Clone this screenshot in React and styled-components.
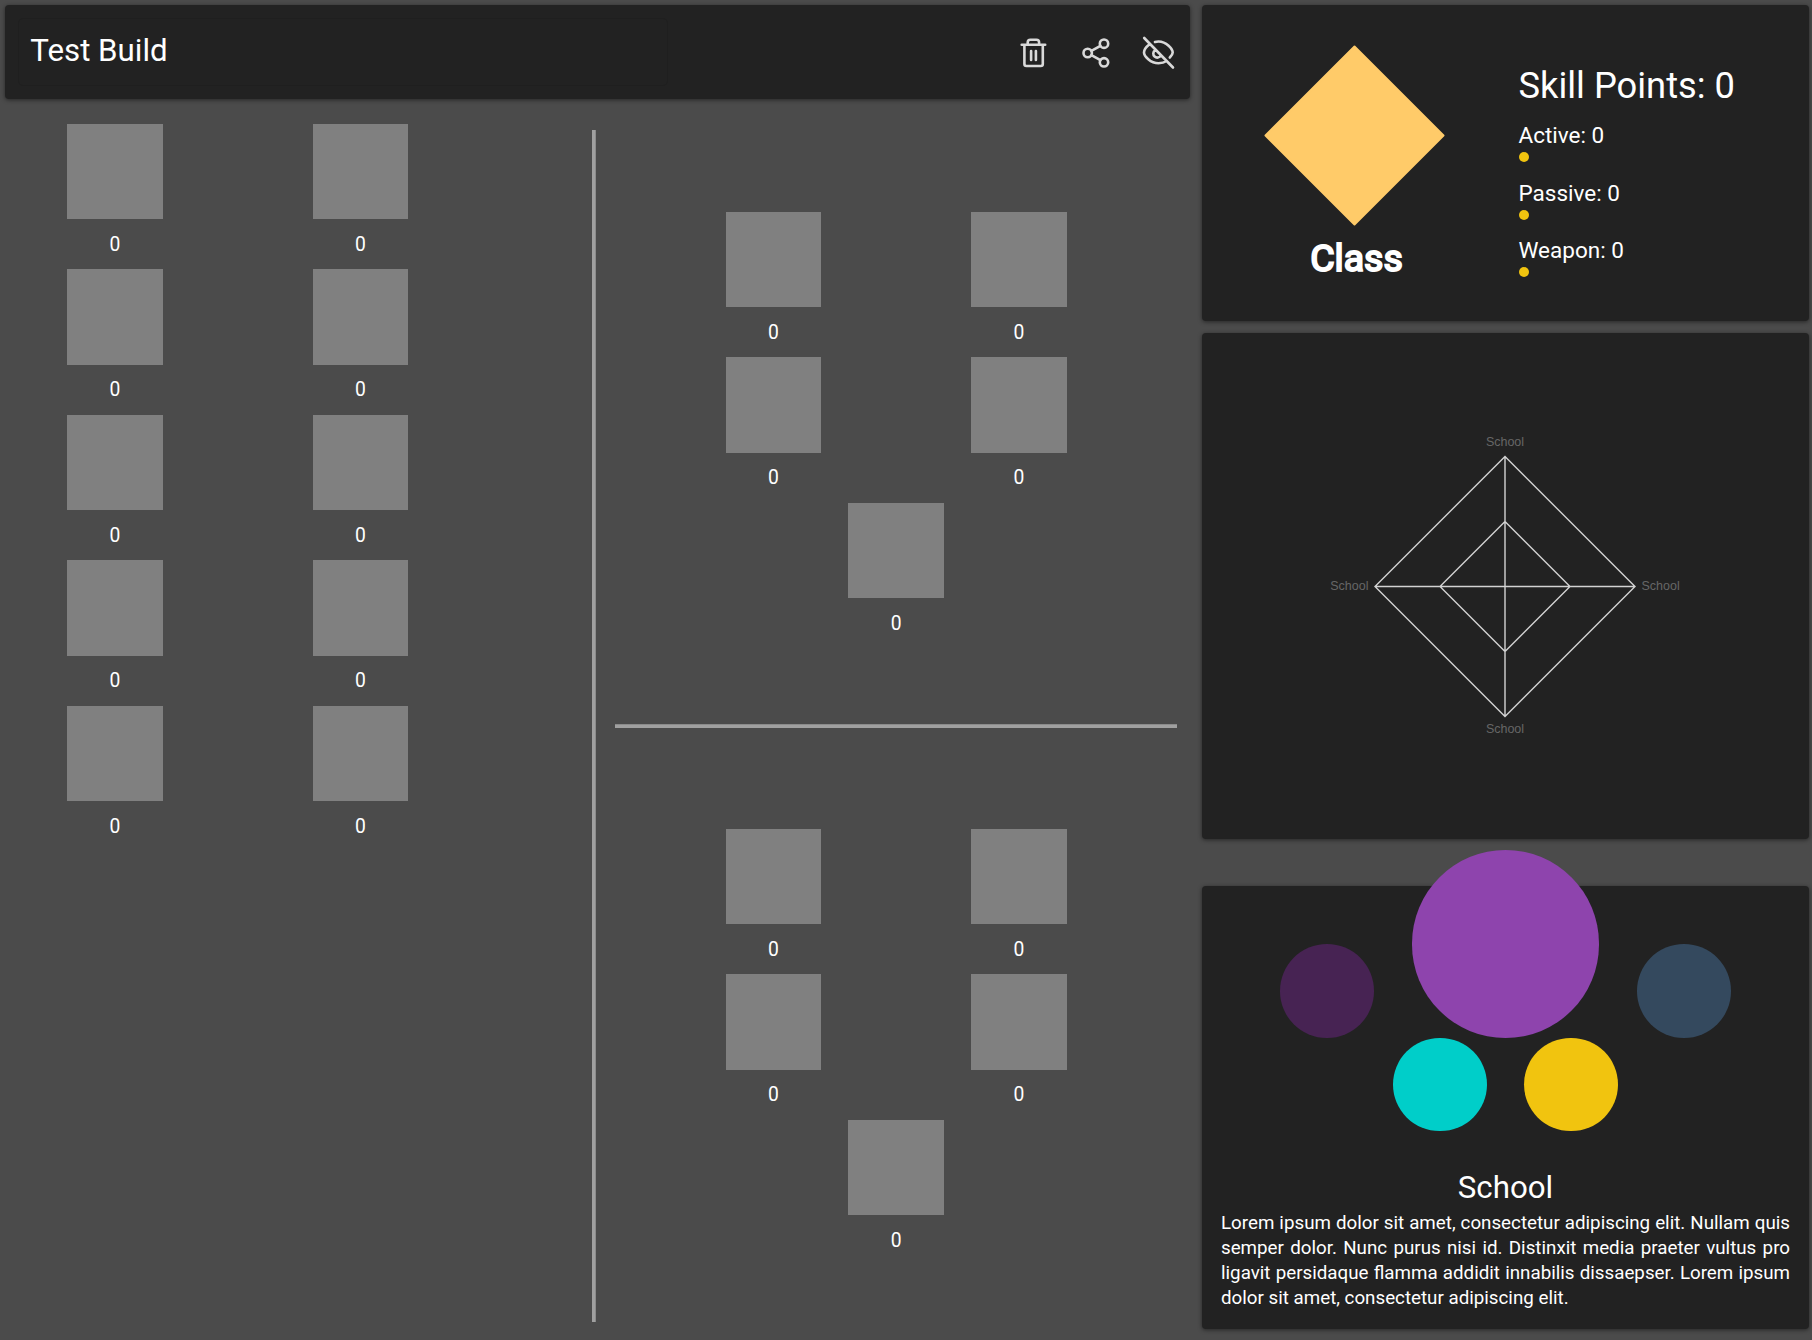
import React from "react";
import styled, { createGlobalStyle } from "styled-components";

const GlobalStyle = createGlobalStyle`
  * { box-sizing: border-box; }
  body { margin: 0; background: #4b4b4b; color: #fff; font-family: Roboto, sans-serif; font-size: 18.75px; }
  h1, h2, h3, p { margin: 0; font-weight: 400; }
`;

const Page = styled.div`
  display: grid;
  grid-template-columns: 1185px 607px;
  column-gap: 12px;
  height: 1340px;
  padding: 5px;
`;

const Panel = styled.section`
  background: #222;
  border-radius: 4px;
  box-shadow: 0 1px 4px rgba(0, 0, 0, 0.5);
`;

const Header = styled(Panel)`
  display: flex;
  align-items: center;
  height: 94px;
  padding: 0 13px;
`;

const NameField = styled.h1`
  width: 650px;
  height: 68px;
  padding: 9px 11.3px;
  border: 1px solid #1f1f1f;
  border-radius: 5px;
  font-size: 31.25px;
  line-height: 46px;
`;

const Actions = styled.nav`
  display: flex;
  gap: 22px;
  margin-left: auto;
  margin-right: -1px;
`;

const IconButton = styled.button`
  display: flex;
  padding: 0;
  border: 0;
  background: none;
  color: #d9d9d9;
`;

const Board = styled.main`
  display: grid;
  grid-template-columns: 587px 4px 1fr;
  height: 1223px;
`;

const ActiveGrid = styled.div`
  display: grid;
  grid-template-columns: 95.6px 95.6px;
  column-gap: 150px;
  align-content: start;
  padding: 25px 0 0 62px;
`;

const Slot = styled.div`
  display: flex;
  flex-direction: column;
  align-items: center;
  height: 145.48px;
`;

const SlotBox = styled.div`
  width: 95.6px;
  height: 95.3px;
  background: #808080;
`;

const SlotCount = styled.span`
  margin-top: 11.7px;
  font-size: 19.3px;
  line-height: 28px;
`;

const VerticalRule = styled.div`
  margin-top: 31px;
  background: #a0a0a0;
  border-right: 1px solid #8b8b8b;
`;

const SideGroups = styled.div`
  display: flex;
  flex-direction: column;
  padding: 113px 13px 0 19px;
`;

const Group = styled.div`
  display: grid;
  grid-template-columns: 95.6px 95.6px;
  column-gap: 149.8px;
  align-content: start;
  padding-left: 110.7px;
  ${Slot}:last-child {
    grid-column: 1 / -1;
  }
`;

const HorizontalRule = styled.div`
  height: 4px;
  margin: 75.8px 0 100.8px;
  background: #a0a0a0;
  border-top: 1px solid #8b8b8b;
`;

const Sidebar = styled.aside`
  display: flex;
  flex-direction: column;
`;

const ClassPanel = styled(Panel)`
  display: flex;
  height: 316px;
`;

const ClassInfo = styled.div`
  display: flex;
  flex-direction: column;
  align-items: center;
  width: 305px;
  padding-top: 40px;
`;

const ClassName = styled.h2`
  margin-top: 7px;
  padding-left: 4px;
  font-size: 37.5px;
  line-height: 48px;
  -webkit-text-stroke: 2px #fff;
`;

const Points = styled.div`
  padding: 58px 0 0 11.5px;
`;

const PointsTitle = styled.h2`
  font-size: 36.3px;
  line-height: 46px;
  margin-bottom: 11px;
`;

const PointsRow = styled.div`
  height: 57.5px;
  font-size: 22.5px;
  line-height: 30px;
  &::after {
    content: "";
    display: block;
    width: 10px;
    height: 10px;
    margin-top: 2px;
    border-radius: 50%;
    background: #f1c40f;
  }
`;

const ChartPanel = styled(Panel)`
  height: 506px;
  margin-top: 12px;
`;

const ChartLabel = styled.text`
  font: 12.5px "Liberation Sans", Arial, sans-serif;
  fill: #666;
`;

const SchoolPanel = styled(Panel)`
  height: 443px;
  margin-top: 47px;
  padding: 0 19px 0 19px;
`;

const Schools = styled.div`
  display: flex;
  justify-content: space-between;
  align-items: flex-end;
  height: 187.5px;
  margin: -36px 59.3px 0 59px;
`;

const LowerSchools = styled.div`
  display: flex;
  justify-content: center;
  gap: 37.5px;
`;

const SchoolDot = styled.div`
  width: ${(p) => (p.$large ? 187.5 : 93.75)}px;
  height: ${(p) => (p.$large ? 187.5 : 93.75)}px;
  border-radius: 50%;
  background: ${(p) => p.$color};
`;

const SchoolName = styled.h2`
  margin-top: 39px;
  font-size: 31.25px;
  line-height: 36px;
  text-align: center;
`;

const Description = styled.p`
  margin-top: 5px;
  line-height: 25px;
  text-align: justify;
`;

function Icon({ children }) {
  return (
    <svg width="40" height="40" viewBox="0 0 40 40" fill="none" stroke="currentColor" strokeWidth="2.6" strokeLinecap="round" strokeLinejoin="round">
      {children}
    </svg>
  );
}

function SlotItem() {
  return (
    <Slot>
      <SlotBox />
      <SlotCount>0</SlotCount>
    </Slot>
  );
}

const slots = (n) => Array.from({ length: n }, (_, i) => <SlotItem key={i} />);

export default function App() {
  return (
    <>
      <GlobalStyle />
      <Page>
        <div>
          <Header>
            <NameField>Test Build</NameField>
            <Actions>
              <IconButton aria-label="Delete">
                <Icon>
                  <path d="M7.700 12.700h23.500M13.700 12.700v-2.200q0-2.700 2.700-2.700h6q2.700 0 2.700 2.700v2.200M10.400 12.700v19.300q0 2 2 2h14.400q2 0 2-2v-19.300M17.100 19v9M21.900 19v9" />
                </Icon>
              </IconButton>
              <IconButton aria-label="Share">
                <Icon>
                  <circle cx="11.7" cy="21" r="4.2" />
                  <circle cx="28" cy="11.7" r="4.2" />
                  <circle cx="28" cy="30.3" r="4.2" />
                  <path d="M15.4 18.9l9-5.1M15.4 23.1l9 5.1" />
                </Icon>
              </IconButton>
              <IconButton aria-label="Hide">
                <Icon>
                  <path d="M6.200 6l28.800 29.500M11.500 12.300C8 15 6 18.500 6 20.500C6 24 12.500 31.200 20.500 31.200Q25.500 31.200 28.500 29M17 10Q18.500 9.500 20.500 9.500C28.500 9.500 34.700 17 34.700 20.500Q34.700 22.700 31.800 25.500M17 18.300A4 4 0 1 0 22.800 23.500" />
                </Icon>
              </IconButton>
            </Actions>
          </Header>
          <Board>
            <ActiveGrid>{slots(10)}</ActiveGrid>
            <VerticalRule />
            <SideGroups>
              <Group>{slots(5)}</Group>
              <HorizontalRule />
              <Group>{slots(5)}</Group>
            </SideGroups>
          </Board>
        </div>
        <Sidebar>
          <ClassPanel>
            <ClassInfo>
              <svg width="182" height="182" viewBox="0 0 182 182">
                <path d="M90.500 1.500L179.500 90.500L90.500 179.500L1.500 90.500Z" fill="#ffcb69" stroke="#ffcb69" strokeWidth="2" strokeLinejoin="round" />
              </svg>
              <ClassName>Class</ClassName>
            </ClassInfo>
            <Points>
              <PointsTitle>Skill Points: 0</PointsTitle>
              <PointsRow>Active: 0</PointsRow>
              <PointsRow>Passive: 0</PointsRow>
              <PointsRow>Weapon: 0</PointsRow>
            </Points>
          </ClassPanel>
          <ChartPanel>
            <svg width="607" height="506" viewBox="0 0 607 506" fill="none" stroke="#d3d3d3" strokeWidth="1.4">
              <path d="M303 123.500L433 253.500L303 383.500L173 253.500Z M303 188.500L368 253.500L303 318.500L238 253.500Z M303 123.500V383.500M173 253.500H433" />
              <g stroke="none">
                <ChartLabel x="303" y="113" textAnchor="middle">School</ChartLabel>
                <ChartLabel x="303" y="400" textAnchor="middle">School</ChartLabel>
                <ChartLabel x="166.500" y="257" textAnchor="end">School</ChartLabel>
                <ChartLabel x="439.500" y="257">School</ChartLabel>
              </g>
            </svg>
          </ChartPanel>
          <SchoolPanel>
            <Schools>
              <SchoolDot $color="#472353" />
              <SchoolDot $large $color="#8e44ad" />
              <SchoolDot $color="#34495e" />
            </Schools>
            <LowerSchools>
              <SchoolDot $color="#00cec9" />
              <SchoolDot $color="#f1c40f" />
            </LowerSchools>
            <SchoolName>School</SchoolName>
            <Description>
              Lorem ipsum dolor sit amet, consectetur adipiscing elit. Nullam quis semper dolor. Nunc purus nisi id. Distinxit media praeter vultus pro ligavit persidaque flamma addidit innabilis dissaepser. Lorem ipsum dolor sit amet, consectetur adipiscing elit.
            </Description>
          </SchoolPanel>
        </Sidebar>
      </Page>
    </>
  );
}
